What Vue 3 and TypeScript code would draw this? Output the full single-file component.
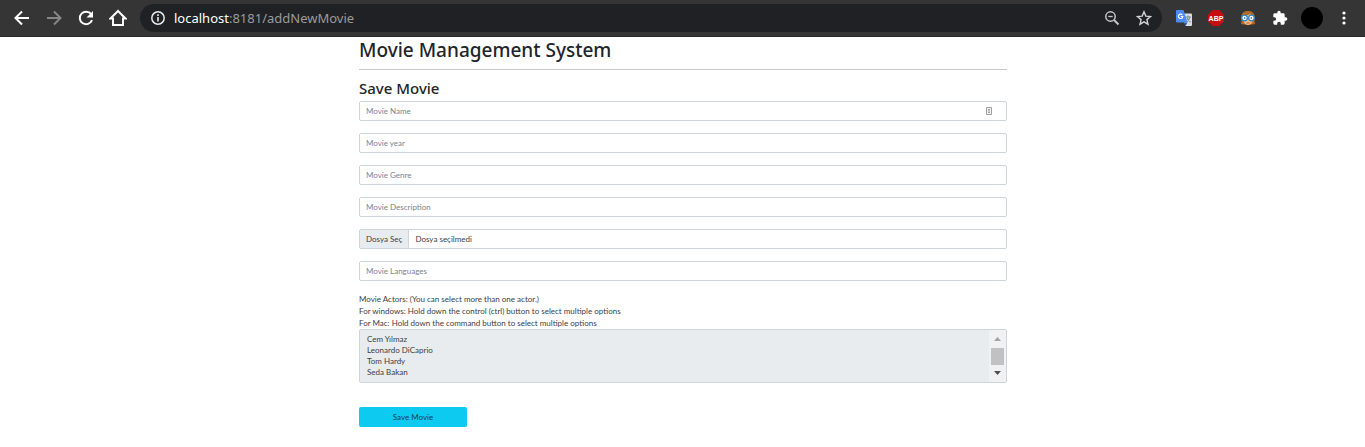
<script setup lang="ts">
import { ref } from 'vue'

interface Field {
  id: string
  label: string
}

const leadingFields: Field[] = [
  { id: 'name', label: 'Movie Name' },
  { id: 'year', label: 'Movie year' },
  { id: 'genre', label: 'Movie Genre' },
  { id: 'description', label: 'Movie Description' },
]
const actors: string[] = ['Cem Yılmaz', 'Leonardo DiCaprio', 'Tom Hardy', 'Seda Bakan']

const values = ref<Record<string, string>>({})
const selectedActors = ref<string[]>([])
</script>

<template>
  <header class="toolbar">
    <nav class="nav-buttons">
      <button type="button" class="icon-button" aria-label="Back">
        <svg width="16" height="16" viewBox="0 0 16 16" fill="none" stroke="#fff" stroke-width="2"><path d="M15 8H2.5M8 1.5 1.5 8 8 14.5" /></svg>
      </button>
      <button type="button" class="icon-button" aria-label="Forward">
        <svg width="16" height="16" viewBox="0 0 16 16" fill="none" stroke="#868686" stroke-width="2"><path d="M1 8h12.500M8 1.500 14.500 8 8 14.500" /></svg>
      </button>
      <button type="button" class="icon-button" aria-label="Reload">
        <svg width="16" height="16" viewBox="0 0 16 16"><path d="M13.200 4.200A6.300 6.300 0 1 0 14 10.200" fill="none" stroke="#fff" stroke-width="2" /><path d="M15 1v6.500H8.500z" fill="#fff" /></svg>
      </button>
      <button type="button" class="icon-button" aria-label="Home">
        <svg width="18" height="18" viewBox="0 0 18 18" fill="none" stroke="#fff" stroke-width="2"><path d="M1.500 9.500H4V16h10V9.500h2.500L9 2z" /></svg>
      </button>
    </nav>
    <div class="address-bar">
      <svg width="14" height="14" viewBox="0 0 14 14"><circle cx="7" cy="7" r="6.200" fill="none" stroke="#e8eaed" stroke-width="1.500" /><path d="M7 6v4.500M7 3.300v1.600" stroke="#e8eaed" stroke-width="1.600" /></svg>
      <span class="url"><span class="host">localhost</span>:8181/addNewMovie</span>
      <button type="button" class="icon-button" aria-label="Zoom">
        <svg width="16" height="16" viewBox="0 0 16 16" fill="none" stroke="#c4c6c9"><circle cx="6.500" cy="6.500" r="4.700" stroke-width="1.500" /><path d="m10 10 4.500 4.500" stroke-width="1.900" /><path d="M4.300 6.500h4.400" stroke-width="1.300" /></svg>
      </button>
      <button type="button" class="icon-button" aria-label="Bookmark">
        <svg width="16" height="16" viewBox="0 0 16 16" fill="none" stroke="#d0d2d5" stroke-width="1.400"><path d="m8 1.800 1.800 4.300 4.700.4-3.600 3.100 1.100 4.600L8 11.800l-4 2.400 1.100-4.600-3.600-3.100 4.700-.4z" /></svg>
      </button>
    </div>
    <div class="extensions">
      <button type="button" class="icon-button" aria-label="Translate">
        <svg width="16" height="16" viewBox="0 0 16 16"><path d="M6 3.500h9a1 1 0 0 1 1 1V15a1 1 0 0 1-1 1H9.500z" fill="#dcdfe1" /><path d="M9.500 7h5.500M12 5.500V7m2 0c-.5 2.500-2 4-3.500 5m.5-4c.5 1.500 2 3 3.500 4" fill="none" stroke="#6f8791" stroke-width="1.100" /><path d="M8 12.500h3.500L9.500 16z" fill="#3553a5" /><path d="M1 0h6.500l4 12.500H1a1 1 0 0 1-1-1V1a1 1 0 0 1 1-1z" fill="#4c8bf5" /><path d="M6.300 4.900a2.200 2.200 0 1 0 .5 1.600H4.700" fill="none" stroke="#fff" stroke-width="1.200" /></svg>
      </button>
      <button type="button" class="icon-button" aria-label="Adblock Plus">
        <svg width="16" height="16" viewBox="0 0 16 16"><path d="M4.700 0h6.600L16 4.700v6.600L11.300 16H4.700L0 11.300V4.700z" fill="#c70d12" /><text x="8" y="11" class="badge" text-anchor="middle" fill="#fff">ABP</text></svg>
      </button>
      <button type="button" class="icon-button" aria-label="Profile helper">
        <svg width="16" height="16" viewBox="0 0 16 16"><path d="M1.500 6.500C1.500 3 4 1 8 1s6.500 2 6.500 5.500V11l.5 3-2.500.5h-9L1 14l.5-3z" fill="#b06a2a" /><path d="M3.500 6.500 10.500 4l2 2.200v4.300c0 2.500-2 4.500-4.500 4.500s-4.500-2-4.500-4.500z" fill="#f3b77c" /><circle cx="4.500" cy="8" r="2.800" fill="#fff" stroke="#2f85c7" stroke-width="1.300" /><circle cx="11.500" cy="8" r="2.800" fill="#fff" stroke="#2f85c7" stroke-width="1.300" /><circle cx="4.700" cy="8" r=".8" fill="#194d7b" /><circle cx="11.300" cy="8" r=".8" fill="#194d7b" /><path d="M6.500 13h3" stroke="#b85834" /></svg>
      </button>
      <button type="button" class="icon-button" aria-label="Extensions">
        <svg width="16" height="16" viewBox="0 0 24 24" fill="#fff"><path d="M20.500 11H19V7a2 2 0 0 0-2-2h-4V3.500a2.500 2.500 0 0 0-5 0V5H4a2 2 0 0 0-2 2v3.800h1.500a2.700 2.700 0 0 1 0 5.400H2V20a2 2 0 0 0 2 2h3.800v-1.500a2.700 2.700 0 0 1 5.400 0V22H17a2 2 0 0 0 2-2v-4h1.500a2.500 2.500 0 0 0 0-5z" /></svg>
      </button>
      <button type="button" class="icon-button avatar" aria-label="Account"></button>
      <button type="button" class="icon-button menu" aria-label="Menu">
        <svg width="4" height="14" viewBox="0 0 4 14" fill="#fff"><circle cx="2" cy="2" r="1.600" /><circle cx="2" cy="7" r="1.600" /><circle cx="2" cy="12" r="1.600" /></svg>
      </button>
    </div>
  </header>

  <main class="page">
    <h1>Movie Management System</h1>
    <hr />
    <h2>Save Movie</h2>
    <form @submit.prevent>
      <div v-for="field in leadingFields" :key="field.id" class="control">
        <input :id="field.id" v-model="values[field.id]" type="text" :placeholder="field.label" :aria-label="field.label" />
        <svg v-if="field.id === 'name'" class="autofill" width="6" height="8" viewBox="0 0 6 8"><path d="M.5.5h5v7h-5z" fill="#f2f2f2" stroke="#a0a0a0" /><path d="M2 2.500h2M3 2.500v3M2 5.500h2" stroke="#a0a0a0" /></svg>
      </div>
      <div class="control file">
        <input id="poster" class="file-input" type="file" />
        <label for="poster"><span class="file-button">Dosya Seç</span><span class="file-name">Dosya seçilmedi</span></label>
      </div>
      <div class="control">
        <input id="languages" v-model="values.languages" type="text" placeholder="Movie Languages" aria-label="Movie Languages" />
      </div>
      <label class="hint" for="actors">
        Movie Actors: (You can select more than one actor.)<br />
        For windows: Hold down the control (ctrl) button to select multiple options<br />
        For Mac: Hold down the command button to select multiple options
      </label>
      <div class="list">
        <select id="actors" v-model="selectedActors" multiple size="4">
          <option v-for="actor in actors" :key="actor">{{ actor }}</option>
        </select>
        <div class="scrollbar" aria-hidden="true">
          <svg width="7" height="4" viewBox="0 0 7 4"><path d="M0 4h7L3.500 0z" fill="#a3a3a3" /></svg>
          <span class="thumb"></span>
          <svg width="7" height="4" viewBox="0 0 7 4"><path d="M0 0h7L3.500 4z" fill="#505050" /></svg>
        </div>
      </div>
      <button type="submit" class="save">Save Movie</button>
    </form>
  </main>
</template>

<style>
body {
  margin: 0;
  background: #fff;
}
</style>

<style scoped>
* {
  box-sizing: border-box;
}

.toolbar {
  display: flex;
  align-items: center;
  height: 37px;
  padding: 0 13px 0 14px;
  border-bottom: 1px solid #282828;
  background: #353535;
  font-family: "Noto Sans", "Open Sans", sans-serif;
}

.icon-button {
  display: flex;
  flex: none;
  align-items: center;
  justify-content: center;
  width: 16px;
  height: 16px;
  padding: 0;
  border: 0;
  background: none;
}

.icon-button svg {
  flex: none;
}

.nav-buttons {
  display: flex;
  gap: 16px;
  margin-right: 14px;
}

.address-bar {
  display: flex;
  flex: 1;
  align-items: center;
  gap: 16px;
  height: 28px;
  padding: 0 10px 0 11px;
  border-radius: 14px;
  background: #202124;
}

.url {
  flex: 1;
  margin-left: -7px;
  color: #9a9b9e;
  font-size: 13px;
  line-height: 20px;
}

.host {
  color: #fff;
}

.extensions {
  display: flex;
  align-items: center;
  gap: 16px;
  margin-left: 14px;
}

.badge {
  font: 700 7px "Liberation Sans", sans-serif;
}

.avatar {
  width: 22px;
  height: 22px;
  margin: 0 -3px;
  border-radius: 50%;
  background: #000;
}

.page {
  max-width: 649px;
  margin: 0 auto;
  padding-left: 1px;
  color: #3c4044;
  font-family: Lato, "Open Sans", sans-serif;
  font-size: 8px;
  line-height: 12px;
}

.page input,
.page select,
.page button {
  font-family: inherit;
}

h1,
h2 {
  margin: 0;
  color: #212529;
  font-family: "Noto Sans", "Open Sans", sans-serif;
  font-weight: 500;
}

h1 {
  font-size: 19px;
  line-height: 26px;
}

h2 {
  margin-bottom: 3px;
  font-size: 15px;
  line-height: 20px;
}

hr {
  height: 1px;
  margin: 6px 0 8px;
  border: 0;
  background: #c7c8c9;
}

.control {
  position: relative;
  margin-bottom: 12px;
}

.control input[type="text"],
.file label {
  display: flex;
  width: 100%;
  height: 20px;
  border: 1px solid #ced4da;
  border-radius: 2px;
  background: #fff;
  color: inherit;
  font-size: 8px;
  line-height: 18px;
}

.control input[type="text"] {
  padding: 0 6px;
}

.control input::placeholder {
  color: #7b838a;
  opacity: 1;
}

.autofill {
  position: absolute;
  top: 6px;
  right: 15px;
}

.file-input {
  position: absolute;
  width: 100%;
  height: 100%;
  margin: 0;
  opacity: 0;
}

.file-button {
  padding: 0 6px;
  border-right: 1px solid #ced4da;
  background: #e9ecef;
}

.file-name {
  padding: 0 6px;
}

.hint {
  display: block;
}

.list {
  display: flex;
  height: 54px;
  margin-bottom: 24px;
  overflow: hidden;
  border: 1px solid #ced4da;
  border-radius: 2px;
  background: #e9ecef;
}

.list select {
  flex: 1;
  padding: 3px 6px;
  overflow: hidden;
  border: 0;
  outline: 0;
  background: transparent;
  color: inherit;
  font-size: 8px;
}

.list option {
  min-height: 0;
  padding: 1px 1px 0;
}

.scrollbar {
  display: flex;
  flex-direction: column;
  align-items: center;
  justify-content: space-between;
  width: 17px;
  padding: 7px 0;
  background: #f1f1f1;
}

.thumb {
  width: 13px;
  height: 17px;
  background: #c1c1c1;
}

.save {
  display: block;
  width: 108px;
  height: 20px;
  padding: 0;
  border: 0;
  border-radius: 2px;
  background: #0dcaf0;
  color: #173f4a;
  font-size: 8px;
  line-height: 20px;
}
</style>
